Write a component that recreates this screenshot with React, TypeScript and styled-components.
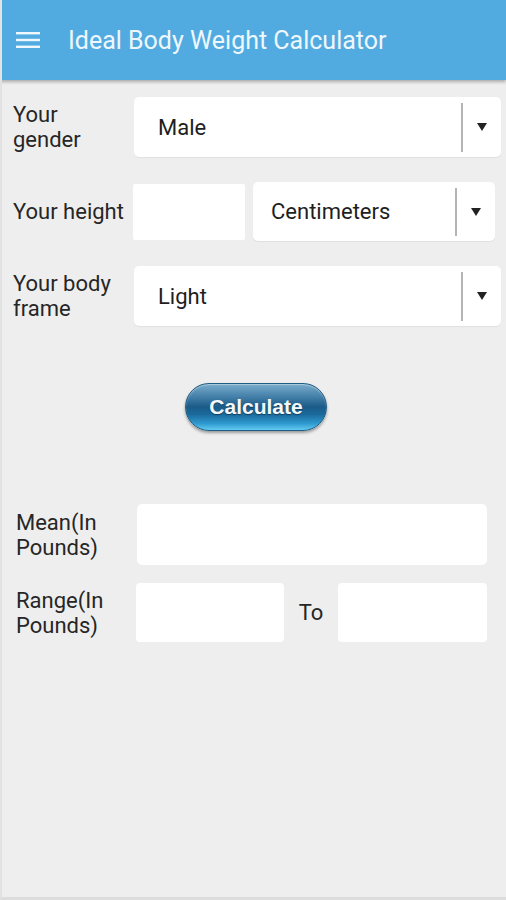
import React from 'react'
import styled, { createGlobalStyle } from 'styled-components'

const Global = createGlobalStyle`
  html, body {
    margin: 0;
    padding: 0;
    background: #eeeeee;
  }
  body {
    font-family: Roboto, "Noto Sans", sans-serif;
  }
`

const Screen = styled.div`
  width: 506px;
  height: 900px;
  background: #eeeeee;
  border-left: 2px solid #e2e2e2;
  border-bottom: 3px solid #dcdcdc;
  box-sizing: border-box;
  overflow: hidden;
`

const AppBar = styled.header`
  height: 80px;
  margin-left: -2px;
  background: #51abe0;
  display: flex;
  align-items: center;
  box-shadow: 0 2px 3px rgba(0, 0, 0, 0.28);
  position: relative;
`

const Menu = styled.svg`
  margin-left: 16px;
  width: 24px;
  height: 18px;
`

const Title = styled.h1`
  margin: 0 0 0 28px;
  font-size: 25px;
  font-weight: 400;
  color: #eef7fd;
`

const Form = styled.section`
  display: flex;
  flex-direction: column;
  padding: 17px 5px 0 11px;
`

const Row = styled.div<{ mt?: number; pr?: number }>`
  display: flex;
  align-items: center;
  margin-top: ${({ mt }) => mt ?? 0}px;
  padding-right: ${({ pr }) => pr ?? 0}px;
`

const Label = styled.div<{ w: number }>`
  width: ${({ w }) => w}px;
  flex: none;
  font-size: 22px;
  line-height: 25px;
  color: #262626;
`

const Select = styled.div<{ h?: number }>`
  flex: 1;
  height: ${({ h }) => h ?? 60}px;
  background: #ffffff;
  border-radius: 5px;
  box-shadow: 0 1px 1px rgba(0, 0, 0, 0.06);
  display: flex;
  align-items: center;
`

const Value = styled.span<{ pl: number }>`
  flex: 1;
  padding-left: ${({ pl }) => pl}px;
  font-size: 22px;
  color: #1e1e1e;
`

const Divider = styled.span`
  width: 2px;
  align-self: stretch;
  margin: 6px 0 5px;
  background: #b4b4b4;
`

const Arrow = styled.span`
  width: 38px;
  display: flex;
  justify-content: center;
`

const Field = styled.div<{ w?: number; h?: number; r?: number }>`
  ${({ w }) => (w ? `width: ${w}px; flex: none;` : 'flex: 1;')}
  height: ${({ h }) => h ?? 60}px;
  background: #ffffff;
  border-radius: ${({ r }) => r ?? 3}px;
`

const ButtonWrap = styled.div`
  display: flex;
  justify-content: center;
  padding: 57px 0 0 4px;
`

const CalcButton = styled.button`
  width: 142px;
  height: 48px;
  border-radius: 24px;
  border: 1px solid #1f5d84;
  background: linear-gradient(
    to bottom,
    #7aaccb 0%,
    #437fa8 28%,
    #1b5b88 50%,
    #1a6a9c 66%,
    #2f9ad0 86%,
    #62cbf0 100%
  );
  box-shadow: 0 2px 3px rgba(0, 0, 0, 0.35), inset 0 1px 1px rgba(255, 255, 255, 0.4);
  color: #f4f8fb;
  font-family: "Liberation Sans", Arial, sans-serif;
  font-weight: 700;
  font-size: 21px;
  text-shadow: 0 1px 1px rgba(0, 0, 0, 0.4);
  padding: 0;
`

const Results = styled.section`
  display: flex;
  flex-direction: column;
  padding: 73px 19px 0 14px;
`

const To = styled.span`
  width: 54px;
  flex: none;
  text-align: center;
  font-size: 22px;
  color: #262626;
`

const Caret = () => (
  <svg width="10" height="8" viewBox="0 0 10 8">
    <path d="M0 0h10L5 8z" fill="#222" />
  </svg>
)

export default function App() {
  return (
    <>
      <Global />
      <Screen>
        <AppBar>
          <Menu viewBox="0 0 24 18">
            <rect x="0" y="1" width="24" height="2.4" fill="#eef7fd" />
            <rect x="0" y="7.8" width="24" height="2.4" fill="#eef7fd" />
            <rect x="0" y="14.6" width="24" height="2.4" fill="#eef7fd" />
          </Menu>
          <Title>Ideal Body Weight Calculator</Title>
        </AppBar>

        <Form>
          <Row>
            <Label w={121}>
              Your
              <br />
              gender
            </Label>
            <Select>
              <Value pl={24}>Male</Value>
              <Divider />
              <Arrow>
                <Caret />
              </Arrow>
            </Select>
          </Row>

          <Row mt={25} pr={6}>
            <Label w={120}>Your height</Label>
            <Field w={112} h={56} r={2} />
            <Select h={59} style={{ marginLeft: 8 }}>
              <Value pl={18}>Centimeters</Value>
              <Divider />
              <Arrow>
                <Caret />
              </Arrow>
            </Select>
          </Row>

          <Row mt={25}>
            <Label w={121}>
              Your body
              <br />
              frame
            </Label>
            <Select>
              <Value pl={24}>Light</Value>
              <Divider />
              <Arrow>
                <Caret />
              </Arrow>
            </Select>
          </Row>
        </Form>

        <ButtonWrap>
          <CalcButton>Calculate</CalcButton>
        </ButtonWrap>

        <Results>
          <Row>
            <Label w={121}>
              Mean(In
              <br />
              Pounds)
            </Label>
            <Field h={61} r={5} />
          </Row>
          <Row mt={18}>
            <Label w={120}>
              Range(In
              <br />
              Pounds)
            </Label>
            <Field w={148} h={59} r={4} />
            <To>To</To>
            <Field h={59} r={4} />
          </Row>
        </Results>
      </Screen>
    </>
  )
}
